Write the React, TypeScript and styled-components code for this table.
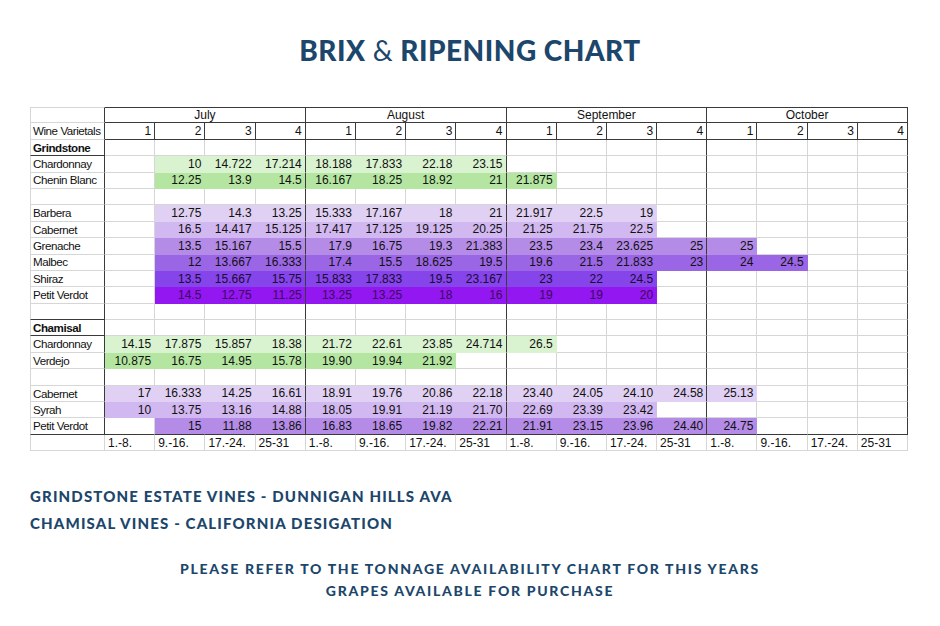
import React from "react";
import styled, { createGlobalStyle } from "styled-components";

const GlobalStyle = createGlobalStyle`
  html, body {
    margin: 0;
    padding: 0;
    background: #ffffff;
  }
  body {
    font-family: "Liberation Sans", Arial, sans-serif;
  }
`;

const NAVY = "#1c466b";
const GRID = "#d6d6d6";
const DARK = "#3a3a3a";

const Page = styled.div`
  width: 940px;
  height: 626px;
  box-sizing: border-box;
  padding: 34px 30px 0 30px;
  display: flex;
  flex-direction: column;
  overflow: hidden;
`;

const Title = styled.h1`
  margin: 0;
  text-align: center;
  font-family: "Lato", sans-serif;
  font-weight: 900;
  font-size: 28px;
  line-height: 32px;
  letter-spacing: 0.5px;
  color: ${NAVY};
`;

const Amp = styled.span`
  font-weight: 400;
`;

const Sheet = styled.div`
  margin-top: 41px;
  display: grid;
  grid-template-columns: 75px repeat(16, 50.19px);
  grid-auto-rows: 16.4px;
  font-size: 12px;
  color: #111;
`;

const Cell = styled.div<{
  $bg?: string;
  $align?: "left" | "right" | "center";
  $bold?: boolean;
  $rb?: boolean;
  $bb?: boolean;
  $tb?: boolean;
  $lb?: boolean;
  $span?: number;
  $label?: boolean;
  $ink?: string;
}>`
  box-sizing: border-box;
  grid-column: span ${(p) => p.$span ?? 1};
  background: ${(p) => p.$bg ?? "#ffffff"};
  border-right: 1px solid ${(p) => (p.$rb ? DARK : p.$bg ?? GRID)};
  border-bottom: 1px solid ${(p) => (p.$bb ? DARK : p.$bg ?? GRID)};
  border-top: ${(p) => (p.$tb ? `1px solid ${DARK}` : "none")};
  border-left: ${(p) => (p.$lb ? `1px solid ${GRID}` : "none")};
  display: flex;
  align-items: center;
  justify-content: ${(p) =>
    p.$align === "left" ? "flex-start" : p.$align === "center" ? "center" : "flex-end"};
  padding: ${(p) => (p.$label ? "0 1px 0 2px" : "0 3px")};
  font-weight: ${(p) => (p.$bold ? 700 : 400)};
  font-size: ${(p) => (p.$label ? "11.6px" : "12px")};
  letter-spacing: ${(p) => (p.$label ? "-0.45px" : "0")};
  color: ${(p) => p.$ink ?? "#111"};
  white-space: nowrap;
  overflow: hidden;
  line-height: 1;
`;

const Notes = styled.div`
  margin-top: 36px;
  display: flex;
  flex-direction: column;
  gap: 9px;
`;

const Note = styled.p`
  margin: 0;
  font-family: "Lato", sans-serif;
  font-weight: 900;
  font-size: 15px;
  line-height: 18px;
  letter-spacing: 1.15px;
  color: ${NAVY};
  text-transform: uppercase;
`;

const Refer = styled.p`
  margin: 26px 0 0 0;
  text-align: center;
  font-family: "Lato", sans-serif;
  font-weight: 900;
  font-size: 14px;
  line-height: 22px;
  letter-spacing: 1.7px;
  color: ${NAVY};
  text-transform: uppercase;
`;

const C = {
  g1: "#d9f2d0",
  g2: "#b4e6a1",
  p1: "#e0d0f3",
  p2: "#d1b8f0",
  p3: "#b48ce8",
  p4: "#9b66e6",
  p5: "#8545ea",
  p6: "#9317f0",
};

type Row = {
  label: string;
  bold?: boolean;
  start?: number;
  values?: string[];
  bg?: string;
  ink?: string;
  kind?: "blank" | "section";
};

const rows: Row[] = [
  { label: "Grindstone", bold: true, kind: "section" },
  { label: "Chardonnay", start: 1, bg: C.g1, values: ["10", "14.722", "17.214", "18.188", "17.833", "22.18", "23.15"] },
  { label: "Chenin Blanc", start: 1, bg: C.g2, values: ["12.25", "13.9", "14.5", "16.167", "18.25", "18.92", "21", "21.875"] },
  { label: "", kind: "blank" },
  { label: "Barbera", start: 1, bg: C.p1, values: ["12.75", "14.3", "13.25", "15.333", "17.167", "18", "21", "21.917", "22.5", "19"] },
  { label: "Cabernet", start: 1, bg: C.p2, values: ["16.5", "14.417", "15.125", "17.417", "17.125", "19.125", "20.25", "21.25", "21.75", "22.5"] },
  { label: "Grenache", start: 1, bg: C.p3, values: ["13.5", "15.167", "15.5", "17.9", "16.75", "19.3", "21.383", "23.5", "23.4", "23.625", "25", "25"] },
  { label: "Malbec", start: 1, bg: C.p4, values: ["12", "13.667", "16.333", "17.4", "15.5", "18.625", "19.5", "19.6", "21.5", "21.833", "23", "24", "24.5"] },
  { label: "Shiraz", start: 1, bg: C.p5, ink: "#1a0a30", values: ["13.5", "15.667", "15.75", "15.833", "17.833", "19.5", "23.167", "23", "22", "24.5"] },
  { label: "Petit Verdot", start: 1, bg: C.p6, ink: "#3a0a5c", values: ["14.5", "12.75", "11.25", "13.25", "13.25", "18", "16", "19", "19", "20"] },
  { label: "", kind: "blank" },
  { label: "Chamisal", bold: true, kind: "section" },
  { label: "Chardonnay", start: 0, bg: C.g1, values: ["14.15", "17.875", "15.857", "18.38", "21.72", "22.61", "23.85", "24.714", "26.5"] },
  { label: "Verdejo", start: 0, bg: C.g2, values: ["10.875", "16.75", "14.95", "15.78", "19.90", "19.94", "21.92"] },
  { label: "", kind: "blank" },
  { label: "Cabernet", start: 0, bg: C.p1, values: ["17", "16.333", "14.25", "16.61", "18.91", "19.76", "20.86", "22.18", "23.40", "24.05", "24.10", "24.58", "25.13"] },
  { label: "Syrah", start: 0, bg: C.p2, values: ["10", "13.75", "13.16", "14.88", "18.05", "19.91", "21.19", "21.70", "22.69", "23.39", "23.42"] },
  { label: "Petit Verdot", start: 1, bg: C.p3, values: ["15", "11.88", "13.86", "16.83", "18.65", "19.82", "22.21", "21.91", "23.15", "23.96", "24.40", "24.75"] },
];

const months = ["July", "August", "September", "October"];
const dates = ["1.-8.", "9.-16.", "17.-24.", "25-31"];
const cols = Array.from({ length: 16 }, (_, i) => i);

const monthEnd = (i: number) => i % 4 === 3;

export default function App() {
  return (
    <>
      <GlobalStyle />
      <Page>
        <Title>
          BRIX <Amp>&amp;</Amp> RIPENING CHART
        </Title>

        <Sheet>
          {/* month header */}
          <Cell $lb $rb style={{ borderTop: `1px solid ${GRID}` }} />
          {months.map((m) => (
            <Cell key={m} $span={4} $align="center" $rb $tb $bb>
              {m}
            </Cell>
          ))}

          {/* week numbers */}
          <Cell $lb $rb $align="left" $label>
            Wine Varietals
          </Cell>
          {cols.map((i) => (
            <Cell key={`w${i}`} $rb $bb>
              {(i % 4) + 1}
            </Cell>
          ))}

          {rows.map((r, ri) => {
            const next = rows[ri + 1];
            const last = ri === rows.length - 1;
            const labelBottom = last || r.kind === "section" || next?.kind === "section";
            return (
              <React.Fragment key={`r${ri}`}>
                <Cell $lb $rb $bb={labelBottom} $align="left" $bold={r.bold} $label>
                  {r.label}
                </Cell>
                {cols.map((c) => {
                  const idx = r.start !== undefined ? c - r.start : -1;
                  const v = r.values && idx >= 0 && idx < r.values.length ? r.values[idx] : undefined;
                  return (
                    <Cell
                      key={`c${ri}-${c}`}
                      $bg={v ? r.bg : undefined}
                      $ink={r.ink}
                      $rb={monthEnd(c)}
                      $bb={last}
                    >
                      {v}
                    </Cell>
                  );
                })}
              </React.Fragment>
            );
          })}

          {/* date ranges */}
          <Cell $lb />
          {cols.map((c) => (
            <Cell key={`d${c}`} $align="left">
              {dates[c % 4]}
            </Cell>
          ))}
        </Sheet>

        <Notes>
          <Note>Grindstone Estate Vines - Dunnigan Hills AVA</Note>
          <Note>Chamisal Vines - California Desigation</Note>
        </Notes>

        <Refer>
          Please refer to the tonnage availability chart for this years
          <br />
          grapes available for purchase
        </Refer>
      </Page>
    </>
  );
}
